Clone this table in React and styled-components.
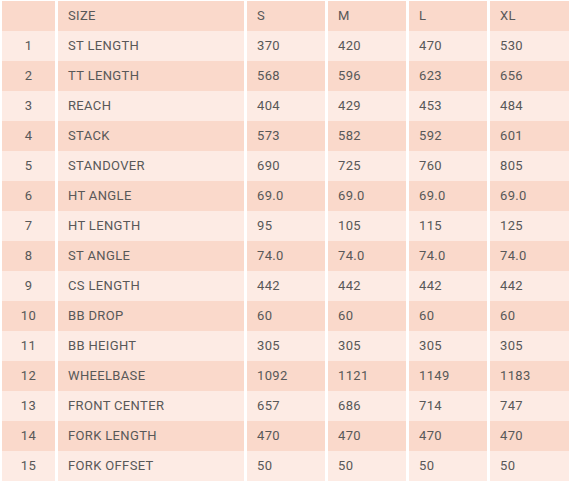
import styled, { createGlobalStyle } from 'styled-components';

const GlobalStyle = createGlobalStyle`
  body {
    margin: 0;
    background: #ffffff;
    font-family: Roboto, "Liberation Sans", sans-serif;
  }
`;

const Wrap = styled.div`
  padding: 1px 0 0 2px;
`;

// 표 한 줄 (헤더 포함)
const Row = styled.div`
  display: grid;
  grid-template-columns: 53px 186px 78px 78px 78px 79px;
  column-gap: 3px;
  height: 30px;
`;

const Cell = styled.div`
  display: flex;
  align-items: center;
  justify-content: ${(props) => (props.center ? 'center' : 'flex-start')};
  padding-left: ${(props) => (props.center ? '0' : '10px')};
  padding-bottom: 1px;
  background-color: ${(props) => (props.dark ? '#fad9cb' : '#fdebe4')};
  color: #585858;
  font-size: 13px;
  letter-spacing: 0.35px;
`;

const sizes = ['S', 'M', 'L', 'XL'];

const geometry = [
  ['ST LENGTH', '370', '420', '470', '530'],
  ['TT LENGTH', '568', '596', '623', '656'],
  ['REACH', '404', '429', '453', '484'],
  ['STACK', '573', '582', '592', '601'],
  ['STANDOVER', '690', '725', '760', '805'],
  ['HT ANGLE', '69.0', '69.0', '69.0', '69.0'],
  ['HT LENGTH', '95', '105', '115', '125'],
  ['ST ANGLE', '74.0', '74.0', '74.0', '74.0'],
  ['CS LENGTH', '442', '442', '442', '442'],
  ['BB DROP', '60', '60', '60', '60'],
  ['BB HEIGHT', '305', '305', '305', '305'],
  ['WHEELBASE', '1092', '1121', '1149', '1183'],
  ['FRONT CENTER', '657', '686', '714', '747'],
  ['FORK LENGTH', '470', '470', '470', '470'],
  ['FORK OFFSET', '50', '50', '50', '50'],
];

const App = () => {
  return (
    <>
      <GlobalStyle />
      <Wrap>
        <Row>
          <Cell dark center />
          <Cell dark>SIZE</Cell>
          {sizes.map((s) => (
            <Cell dark key={s}>{s}</Cell>
          ))}
        </Row>
        {geometry.map((row, i) => {
          // 짝수 번째 줄은 진한 색
          const dark = i % 2 === 1;
          return (
            <Row key={row[0]}>
              <Cell dark={dark} center>{i + 1}</Cell>
              {row.map((v, j) => (
                <Cell dark={dark} key={j}>{v}</Cell>
              ))}
            </Row>
          );
        })}
      </Wrap>
    </>
  );
};

export default App;
